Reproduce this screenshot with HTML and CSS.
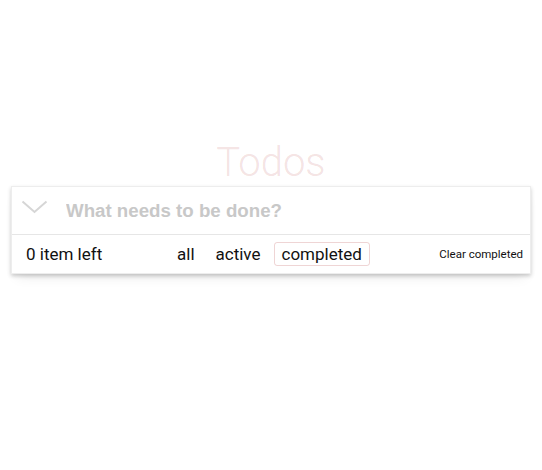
FILE: index.html
```html
<!DOCTYPE html>
<html>
<head>
<meta charset="utf-8">
<link rel="stylesheet" href="styles.css">
</head>
<body>
<section class="todoapp">
  <h1 class="title">Todos</h1>
  <div class="card">
    <div class="new-row">
      <span class="toggle-all">
        <svg width="27" height="14" viewBox="0 0 27 14"><path d="M1.5 1.5 L13.5 12 L25.5 1.5" fill="none" stroke="#d6d6d6" stroke-width="2"/></svg>
      </span>
      <input class="new-todo" placeholder="What needs to be done?">
    </div>
    <footer class="footer">
      <span class="count">0 item left</span>
      <ul class="filters">
        <li><a class="filter">all</a></li>
        <li><a class="filter">active</a></li>
        <li><a class="filter selected">completed</a></li>
      </ul>
      <button class="clear">Clear completed</button>
    </footer>
  </div>
</section>
</body>
</html>
```
FILE: styles.css
```css
html, body { margin: 0; padding: 0; }
body {
  background: #fff;
  font-family: Roboto, "Liberation Sans", sans-serif;
  color: #111;
  width: 542px;
  height: 470px;
}
.todoapp {
  width: 520px;
  margin: 0 auto;
  padding-top: 139px;
}
.title {
  margin: 0;
  text-align: center;
  font-weight: 300;
  font-size: 40px;
  line-height: 47px;
  color: rgba(175, 47, 47, 0.15);
}
.card {
  background: #fff;
  border: 1px solid #ededed;
  box-shadow: 0 2px 4px rgba(0,0,0,0.2), 0 8px 12px -6px rgba(0,0,0,0.1);
}
.new-row {
  display: flex;
  align-items: center;
  height: 47px;
  border-bottom: 1px solid #e6e6e6;
}
.toggle-all {
  display: flex;
  padding-left: 9px;
  margin-right: 18px;
  padding-bottom: 8px;
}
.new-todo {
  flex: 1;
  border: 0;
  outline: none;
  font-family: "Liberation Sans", Arial, sans-serif;
  font-size: 18.7px;
  font-weight: 700;
  padding: 0;
  color: #333;
}
.new-todo::placeholder { color: #c8c8c8; }
.footer {
  display: flex;
  align-items: center;
  height: 38px;
  padding: 0 7px 0 14px;
}
.count {
  font-size: 17px;
  width: 143px;
}
.filters {
  list-style: none;
  margin: 0;
  padding: 0;
  display: flex;
  gap: 5px;
  flex: 1;
}
.filter {
  display: block;
  font-size: 17px;
  line-height: 20px;
  padding: 1px 7px;
  border: 1px solid transparent;
  border-radius: 3px;
  color: #111;
}
.filter.selected { border-color: rgba(175, 47, 47, 0.2); }
.clear {
  border: 0;
  background: none;
  padding: 0;
  font-family: Roboto, "Liberation Sans", sans-serif;
  font-size: 11.5px;
  color: #111;
}
```
